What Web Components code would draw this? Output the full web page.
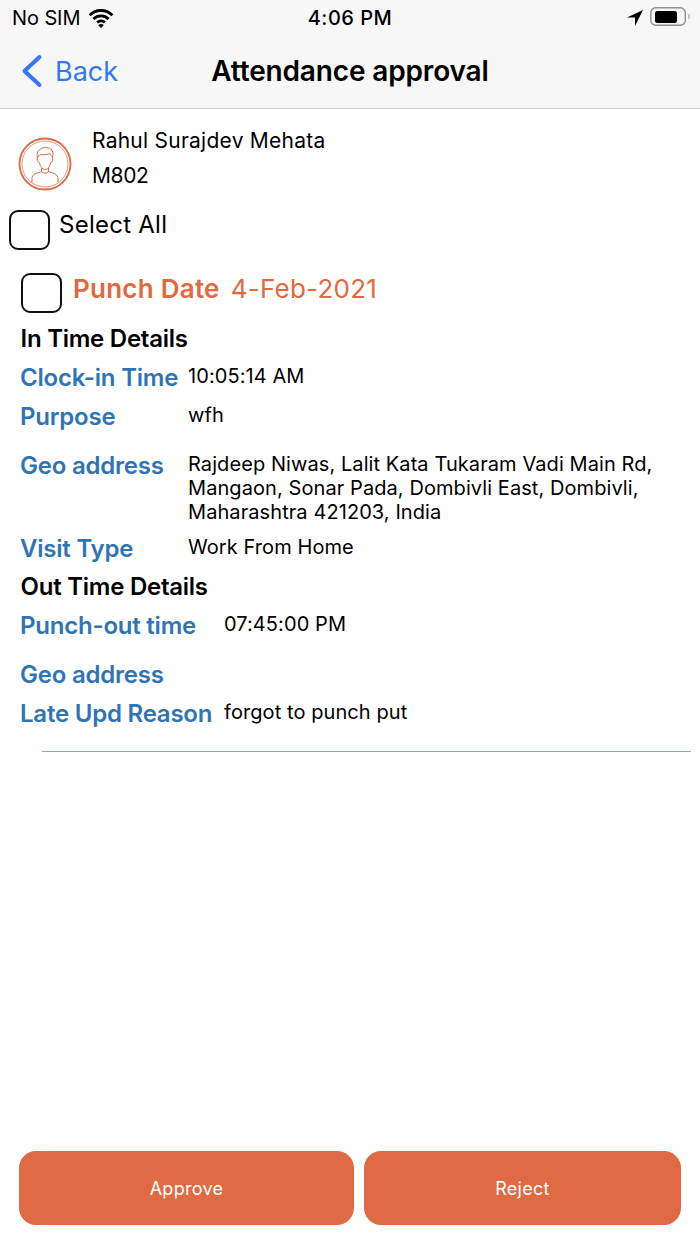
<!DOCTYPE html>
<html>
<head>
<meta charset="utf-8">
<style>
  html, body { margin: 0; padding: 0; background: #fff; }
  body { width: 700px; height: 1244px; font-family: Inter, "Liberation Sans", sans-serif; color: #000; }
</style>
</head>
<body>
<app-screen>
  <nav-header slot="top" title="Attendance approval" back="Back"></nav-header>
  <employee-row name="Rahul Surajdev Mehata" code="M802"></employee-row>
  <check-row label="Select All"></check-row>
  <punch-card date="4-Feb-2021">
    <section-title>In Time Details</section-title>
    <detail-row label="Clock-in Time" after="11">10:05:14 AM</detail-row>
    <detail-row label="Purpose" after="21">wfh</detail-row>
    <detail-row label="Geo address" after="11">Rajdeep Niwas, Lalit Kata Tukaram Vadi Main Rd, Mangaon, Sonar Pada, Dombivli East, Dombivli, Maharashtra 421203, India</detail-row>
    <detail-row label="Visit Type" after="9">Work From Home</detail-row>
    <section-title>Out Time Details</section-title>
    <detail-row label="Punch-out time" wide after="21">07:45:00 PM</detail-row>
    <detail-row label="Geo address" wide after="11"></detail-row>
    <detail-row label="Late Upd Reason" wide after="0">forgot to punch put</detail-row>
  </punch-card>
  <action-bar slot="bottom">
    <action-button>Approve</action-button>
    <action-button>Reject</action-button>
  </action-bar>
</app-screen>

<script>
const appScreenTemplate = document.createElement("template");
appScreenTemplate.innerHTML = `
  <style>
    :host { display: flex; flex-direction: column; width: 700px; height: 1244px; overflow: hidden; }
    main { flex: 1; min-height: 0; }
  </style>
  <slot name="top"></slot>
  <main><slot></slot></main>
  <slot name="bottom"></slot>
`;

class AppScreen extends HTMLElement {
  constructor() {
    super();
    this.attachShadow({ mode: "open" }).appendChild(appScreenTemplate.content.cloneNode(true));
  }
}
customElements.define("app-screen", AppScreen);

class NavHeader extends HTMLElement {
  constructor() {
    super();
    this.attachShadow({ mode: "open" }).innerHTML = `
      <style>
        :host { display: block; height: 109px; box-sizing: border-box; background: #f7f7f7; border-bottom: 1px solid #d2d2d2; }
        .status { height: 36px; display: grid; grid-template-columns: 1fr auto 1fr; align-items: center; font-size: 20px; padding: 0 9px 0 12px; }
        .left { display: flex; align-items: center; gap: 8px; letter-spacing: -.1px; }
        .right { display: flex; align-items: center; justify-content: flex-end; gap: 7px; }
        .right .battery { margin-top: -2px; }
        .time { font-weight: 500; letter-spacing: .5px; margin-left: -3px; }
        .bar { height: 70px; display: grid; grid-template-columns: 1fr auto 1fr; align-items: center; padding: 0 21px; }
        .back { display: flex; align-items: center; gap: 12px; color: #3478f6; font-size: 27px; }
        .title { font-size: 28px; font-weight: 600; letter-spacing: -.15px; }
        svg { display: block; }
      </style>
      <div class="status">
        <div class="left">No SIM
          <svg width="26" height="19" viewBox="0 0 27 20"><path d="M1.500 6.500a17 17 0 0 1 24 0M5.500 10.500a11.500 11.500 0 0 1 16 0M9.500 14.200a6 6 0 0 1 8 0" fill="none" stroke="#000" stroke-width="3"/><path d="M13.500 20l-3-3a4.200 4.200 0 0 1 6 0z"/></svg>
        </div>
        <div class="time">4:06 PM</div>
        <div class="right">
          <svg width="16" height="16" viewBox="0 0 16 16"><path d="M16 0L0 7.500h8V16z"/></svg>
          <svg class="battery" width="41" height="20" viewBox="0 0 41 20"><rect x=".8" y=".8" width="34.500" height="17.500" rx="5" fill="none" stroke="#8e8e8e" stroke-width="1.400"/><rect x="5" y="4" width="22" height="12" rx="2.500"/><path d="M38.500 6.500v6c1.400-.5 1.400-5.500 0-6z" fill="#8e8e8e"/></svg>
        </div>
      </div>
      <div class="bar">
        <div class="back">
          <svg width="22" height="34" viewBox="0 0 22 34"><path d="M18.500 3L3.500 17l15 14" fill="none" stroke="#3478f6" stroke-width="4" stroke-linecap="round" stroke-linejoin="round"/></svg>
          <span>${this.getAttribute("back")}</span>
        </div>
        <div class="title">${this.getAttribute("title")}</div>
      </div>
    `;
  }
}
customElements.define("nav-header", NavHeader);

class EmployeeRow extends HTMLElement {
  constructor() {
    super();
    this.attachShadow({ mode: "open" }).innerHTML = `
      <style>
        :host { display: flex; gap: 20px; padding: 19px 0 0 18px; height: 101px; box-sizing: border-box; font-size: 21px; }
        svg { margin-top: 9px; flex: none; }
        .lines { display: flex; flex-direction: column; gap: 9px; }
        .lines div { line-height: 26px; letter-spacing: .25px; }
        .lines .code { letter-spacing: -.4px; }
      </style>
      <svg width="54" height="54" viewBox="0 0 54 54" fill="none" stroke="#e1683f" stroke-width="1">
        <circle cx="27" cy="27" r="25.500" stroke-width="1.800"/>
        <circle cx="27" cy="27" r="23" stroke-width=".7"/>
        <path d="M19.500 20c-1.200-4 .5-7 2.500-7.500 2-2.500 8.500-2.500 10.500-.5 2.500 1 3 4.500 2 8M19.500 20c-1 2.500.5 5.500 1.800 5.500 1 4.500 3.200 7 5.700 7s4.700-2.500 5.700-7c1.300 0 2.800-3 1.800-5.500-1-.8-2-2-3-3.500-3 1.500-7 1.500-9.500 1-1 1-2 2-2.500 3z"/>
        <path d="M23.500 31v3.500c-3 1.500-8 1.500-9.500 6v5M30.500 31v3.500c3 1.500 8 1.500 9.500 6v5M23.500 34.500c1 2 6 2 7 0"/>
      </svg>
      <div class="lines"><div>${this.getAttribute("name")}</div><div class="code">${this.getAttribute("code")}</div></div>
    `;
  }
}
customElements.define("employee-row", EmployeeRow);

class CheckBox extends HTMLElement {
  constructor() {
    super();
    this.attachShadow({ mode: "open" }).innerHTML = `
      <style>
        :host { display: block; flex: none; width: 41px; height: 40px; box-sizing: border-box; border: 2px solid #111; border-radius: 9px; background: #fff; }
      </style>
    `;
  }
}
customElements.define("check-box", CheckBox);

class CheckRow extends HTMLElement {
  constructor() {
    super();
    this.attachShadow({ mode: "open" }).innerHTML = `
      <style>
        :host { display: flex; gap: 9px; padding-left: 9px; height: 63px; font-size: 24px; }
        span { line-height: 30px; letter-spacing: .25px; }
      </style>
      <check-box></check-box>
      <span>${this.getAttribute("label")}</span>
    `;
  }
}
customElements.define("check-row", CheckRow);

class PunchCard extends HTMLElement {
  constructor() {
    super();
    this.attachShadow({ mode: "open" }).innerHTML = `
      <style>
        :host { display: block; padding-left: 21px; }
        .head { display: flex; align-items: flex-start; gap: 11px; height: 41px; color: #e1683f; line-height: 32px; }
        .head b { font-size: 26px; font-weight: 600; letter-spacing: .25px; }
        .head span { font-size: 26px; letter-spacing: .25px; }
        .body { padding-top: 10px; }
        hr { margin: 23px 9px 0 21px; border: 0; border-top: 1px solid #8aabd0; }
      </style>
      <div class="head"><check-box></check-box><b>Punch Date</b><span>${this.getAttribute("date")}</span></div>
      <div class="body"><slot></slot></div>
      <hr>
    `;
  }
}
customElements.define("punch-card", PunchCard);

class SectionTitle extends HTMLElement {
  constructor() {
    super();
    this.attachShadow({ mode: "open" }).innerHTML = `
      <style>
        :host { display: block; height: 40px; margin-left: -.5px; font-size: 24px; font-weight: 600; line-height: 30px; letter-spacing: -.25px; }
      </style>
      <slot></slot>
    `;
  }
}
customElements.define("section-title", SectionTitle);

class DetailRow extends HTMLElement {
  constructor() {
    super();
    const labelWidth = this.hasAttribute("wide") ? 203 : 167;
    this.attachShadow({ mode: "open" }).innerHTML = `
      <style>
        :host { display: grid; grid-template-columns: ${labelWidth}px 1fr; min-height: 28px; margin-bottom: ${this.getAttribute("after")}px; }
        .label { margin-left: -1px; color: #2f75b5; font-size: 24px; font-weight: 600; line-height: 28px; white-space: nowrap; letter-spacing: -.22px; }
        .value { font-size: 20px; line-height: 24px; letter-spacing: .08px; padding-right: 30px; }
      </style>
      <div class="label">${this.getAttribute("label")}</div>
      <div class="value"><slot></slot></div>
    `;
  }
}
customElements.define("detail-row", DetailRow);

class ActionBar extends HTMLElement {
  constructor() {
    super();
    this.attachShadow({ mode: "open" }).innerHTML = `
      <style>
        :host { display: grid; grid-template-columns: 335px 317px; gap: 10px; padding: 0 19px 19px; }
      </style>
      <slot></slot>
    `;
  }
}
customElements.define("action-bar", ActionBar);

class ActionButton extends HTMLElement {
  constructor() {
    super();
    this.attachShadow({ mode: "open" }).innerHTML = `
      <style>
        :host { display: flex; align-items: center; justify-content: center; height: 74px; border-radius: 17px; background: #e06a43; color: #fff; font-size: 18px; letter-spacing: .3px; }
      </style>
      <slot></slot>
    `;
  }
}
customElements.define("action-button", ActionButton);
</script>
</body>
</html>
